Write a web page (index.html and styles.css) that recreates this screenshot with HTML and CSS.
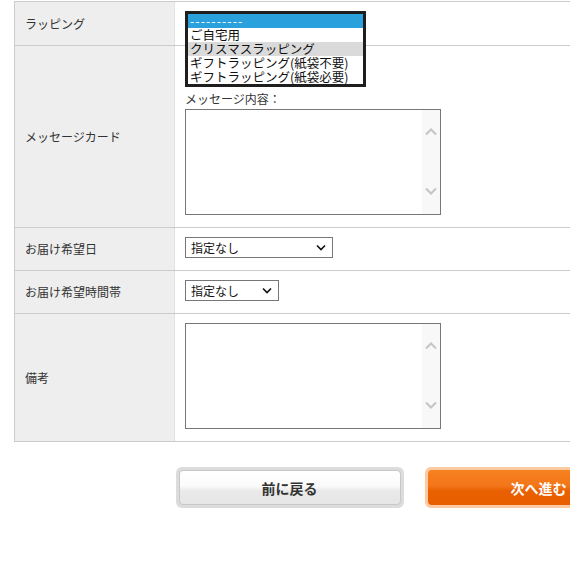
FILE: index.html
```html
<!DOCTYPE html>
<html lang="ja">
<head>
<meta charset="utf-8">
<link rel="stylesheet" href="styles.css">
</head>
<body>
<div class="page">
  <div class="form">
    <div class="row row-wrap">
      <div class="th">ラッピング</div>
      <div class="td td-wrap">
        <ul class="listbox">
          <li class="opt selected">----------</li>
          <li class="opt">ご自宅用</li>
          <li class="opt hover">クリスマスラッピング</li>
          <li class="opt">ギフトラッピング(紙袋不要)</li>
          <li class="opt">ギフトラッピング(紙袋必要)</li>
        </ul>
      </div>
    </div>
    <div class="row row-card">
      <div class="th">メッセージカード</div>
      <div class="td td-card">
        <div class="caption">メッセージ内容：</div>
        <div class="textbox">
          <textarea class="ta"></textarea>
          <div class="sbar">
            <svg class="chev" width="12" height="8" viewBox="0 0 12 8"><path d="M1 6.5 L6 1.5 L11 6.5" fill="none" stroke="#c4c4c4" stroke-width="2"/></svg>
            <svg class="chev" width="12" height="8" viewBox="0 0 12 8"><path d="M1 1.5 L6 6.5 L11 1.5" fill="none" stroke="#c4c4c4" stroke-width="2"/></svg>
          </div>
        </div>
      </div>
    </div>
    <div class="row row-sel">
      <div class="th">お届け希望日</div>
      <div class="td td-sel">
        <select class="sel sel-date"><option>指定なし</option></select>
      </div>
    </div>
    <div class="row row-sel">
      <div class="th">お届け希望時間帯</div>
      <div class="td td-sel">
        <select class="sel sel-time"><option>指定なし</option></select>
      </div>
    </div>
    <div class="row row-note">
      <div class="th">備考</div>
      <div class="td td-note">
        <div class="textbox">
          <textarea class="ta"></textarea>
          <div class="sbar">
            <svg class="chev" width="12" height="8" viewBox="0 0 12 8"><path d="M1 6.5 L6 1.5 L11 6.5" fill="none" stroke="#c4c4c4" stroke-width="2"/></svg>
            <svg class="chev" width="12" height="8" viewBox="0 0 12 8"><path d="M1 1.5 L6 6.5 L11 1.5" fill="none" stroke="#c4c4c4" stroke-width="2"/></svg>
          </div>
        </div>
      </div>
    </div>
  </div>
  <div class="actions">
    <button class="btn btn-back"><span class="btn-in">前に戻る</span></button>
    <button class="btn btn-next"><span class="btn-in">次へ進む</span></button>
  </div>
</div>
</body>
</html>
```
FILE: styles.css
```css
html, body {
  margin: 0;
  padding: 0;
  overflow: hidden;
  background: #fff;
}
body {
  font-family: "Noto Sans CJK JP", "Liberation Sans", sans-serif;
  font-size: 12px;
  color: #333;
}
.page {
  width: 800px;
  padding: 1px 0 0 14px;
}
.form {
  border-top: 1px solid #ccc;
  border-left: 1px solid #ccc;
}
.row {
  display: grid;
  grid-template-columns: 160px 1fr;
  border-bottom: 1px solid #ccc;
}
.th {
  background: #eeeeee;
  border-right: 1px dotted #d8d8d8;
  display: flex;
  align-items: center;
  padding-left: 10px;
  line-height: 16px;
}
.td {
  padding: 0 10px;
  position: relative;
}
.row-wrap { height: 43px; }
.row-card { height: 181px; }
.row-sel { height: 42px; }
.row-note { height: 127px; }

.listbox {
  position: absolute;
  top: 9px;
  left: 10px;
  z-index: 5;
  margin: 0;
  padding: 0;
  list-style: none;
  width: 175px;
  border: 3px solid #1e1e1e;
  background: #fff;
  font-size: 12.5px;
  line-height: 14px;
  color: #111;
}
.opt {
  height: 14px;
  padding-left: 2px;
  white-space: nowrap;
}
.opt.selected {
  background: #2aa0dc;
  color: #fff;
  letter-spacing: 1px;
}
.opt.hover {
  background: #dadada;
}

.td-card { padding-top: 45px; }
.caption {
  line-height: 16px;
  height: 16px;
  margin-bottom: 2px;
}
.textbox {
  display: flex;
  width: 254px;
  height: 104px;
  border: 1px solid #777;
  background: #fff;
}
.ta {
  flex: 1;
  border: none;
  outline: none;
  resize: none;
  margin: 0;
  padding: 2px;
  overflow: hidden;
  font: inherit;
}
.sbar {
  width: 18px;
  background: #f8f8f8;
  display: flex;
  flex-direction: column;
  justify-content: space-between;
  align-items: center;
  padding: 18px 0 19px;
}
.chev { display: block; }

.td-sel { padding-top: 9px; }
.sel {
  -webkit-appearance: none;
  appearance: none;
  display: block;
  height: 21px;
  border: 1px solid #777;
  border-radius: 0;
  background: #fff url("data:image/svg+xml,%3Csvg xmlns='http://www.w3.org/2000/svg' width='10' height='7' viewBox='0 0 10 7'%3E%3Cpath d='M1 1.5 L5 5.5 L9 1.5' fill='none' stroke='%23111' stroke-width='1.6'/%3E%3C/svg%3E") no-repeat right 6px center;
  font-family: "Noto Sans CJK JP", sans-serif;
  font-size: 12px;
  color: #111;
  padding: 0 0 0 5px;
  margin: 0;
}
.sel-date { width: 148px; }
.sel-time { width: 94px; }

.td-note { padding-top: 9px; }

.actions {
  display: flex;
  justify-content: center;
  gap: 21px;
  margin-top: 25px;
}
.btn {
  width: 228px;
  height: 41px;
  padding: 3px;
  border-radius: 6px;
  border: none;
  margin: 0;
  font-family: "Noto Sans CJK JP", sans-serif;
  font-weight: bold;
  font-size: 14px;
  cursor: pointer;
}
.btn-in {
  display: flex;
  align-items: center;
  justify-content: center;
  height: 100%;
  border-radius: 4px;
  box-sizing: border-box;
}
.btn-back {
  background: #dcdcdc;
}
.btn-back .btn-in {
  border: 1px solid #c8c8c8;
  background: linear-gradient(#ffffff 0%, #fbfbfb 45%, #e9e9e9 60%, #e6e6e6 100%);
  color: #333;
}
.btn-next {
  background: #fbc9a2;
}
.btn-next .btn-in {
  background: linear-gradient(#f7811f 0%, #f3761a 45%, #e96000 60%, #e85e00 100%);
  color: #fff;
}
```
